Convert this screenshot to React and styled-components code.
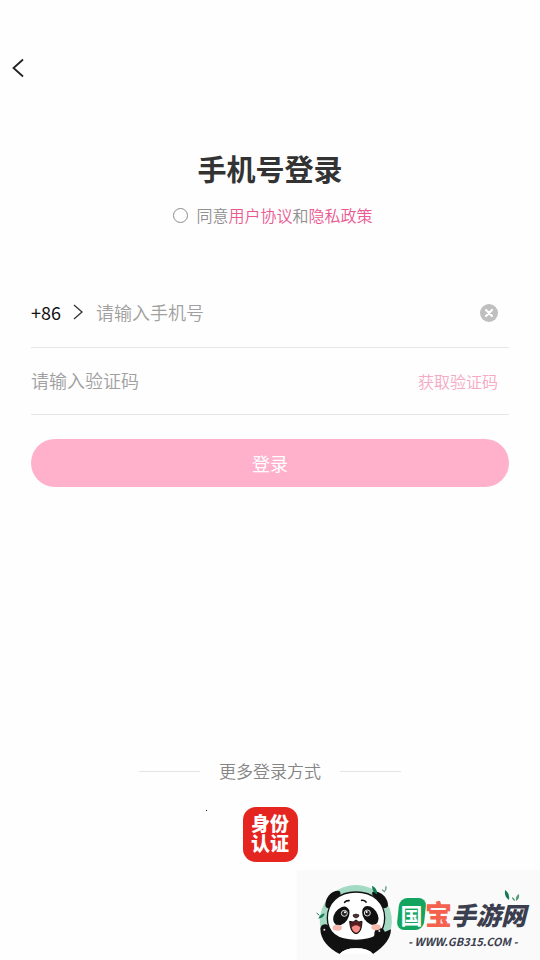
import React, { useState } from 'react'
import styled, { createGlobalStyle } from 'styled-components'

const GlobalStyle = createGlobalStyle`
  * {
    box-sizing: border-box;
  }
  body {
    margin: 0;
    background: #fefefe;
    font-family: 'Noto Sans CJK SC', sans-serif;
    font-weight: 350;
  }
  button,
  input {
    font-family: inherit;
    font-weight: inherit;
  }
`

const Page = styled.div`
  position: relative;
  display: flex;
  flex-direction: column;
  min-height: 100vh;
  overflow: hidden;
`

const TopBar = styled.header`
  display: flex;
  align-items: center;
  height: 48px;
  margin-top: 44px;
  padding-left: 8px;
`

const IconButton = styled.button`
  display: flex;
  padding: 0;
  border: 0;
  background: none;
  cursor: pointer;
`

const Heading = styled.div`
  display: flex;
  flex-direction: column;
  align-items: center;
  margin-top: 52px;
`

const Title = styled.h1`
  margin: 0;
  font-size: 29px;
  line-height: 48px;
  font-weight: 700;
  color: #333;
`

const Agreement = styled.div`
  display: flex;
  align-items: center;
  gap: 8px;
  margin-top: 11px;
  padding-left: 6px;
  font-size: 16px;
  line-height: 24px;
  color: #8f8f8f;
`

const Check = styled.input`
  appearance: none;
  width: 15px;
  height: 15px;
  margin: 0;
  border: 1px solid #8c8c8c;
  border-radius: 50%;
  &:checked {
    background: #f16a9c;
  }
`

const Link = styled.a`
  color: #ea5a92;
  text-decoration: none;
`

const Form = styled.form`
  display: flex;
  flex-direction: column;
  margin-top: 51px;
  padding: 0 31px;
`

const Row = styled.div`
  display: flex;
  align-items: center;
  height: ${(props) => (props.$tall ? '70px' : '67px')};
  padding-right: 11px;
  border-bottom: 1px solid #e6e6e6;
`

const AreaCode = styled.button`
  display: flex;
  align-items: center;
  gap: 11px;
  margin-right: 12px;
  padding: 0 0 2px;
  border: 0;
  background: none;
  font-size: 18px;
  line-height: 24px;
  font-weight: 400;
  color: #111;
`

const Field = styled.input`
  flex: 1;
  min-width: 0;
  height: 40px;
  padding: 0 0 2px;
  border: 0;
  outline: none;
  background: none;
  font-size: 18px;
  color: #333;
  &::placeholder {
    color: #a0a0a0;
  }
`

const CodeButton = styled.button`
  padding: 0;
  border: 0;
  background: none;
  font-size: 16px;
  line-height: 24px;
  color: #f6a9c5;
`

const Submit = styled.button`
  height: 48px;
  margin-top: 24px;
  border: 0;
  border-radius: 24px;
  background: #ffb1cc;
  font-size: 18px;
  font-weight: 400;
  color: #fff;
`

const More = styled.section`
  display: flex;
  flex-direction: column;
  align-items: center;
  margin-top: auto;
  padding-bottom: 98px;
`

const Divider = styled.div`
  display: flex;
  align-items: center;
  gap: 19px;
  font-size: 17px;
  line-height: 24px;
  color: #858585;
  &::before,
  &::after {
    content: '';
    width: 61px;
    height: 1px;
    background: #e4e4e4;
  }
`

const Methods = styled.div`
  display: grid;
  grid-template-columns: 1fr auto 1fr;
  width: 128px;
  margin-top: 24px;
`

const Dot = styled.i`
  width: 1px;
  height: 1px;
  margin-top: 3px;
  background: #111;
`

const IdButton = styled.button`
  width: 55px;
  height: 55px;
  padding: 0 0 3px;
  border: 0;
  border-radius: 13px;
  background: #e5251f;
  font-size: 19px;
  line-height: 20px;
  font-weight: 900;
  color: #fff;
`

const Brand = styled.aside`
  position: absolute;
  right: 0;
  bottom: 0;
  display: flex;
  width: 243px;
  height: 90px;
  padding: 12px 0 0 19px;
  background: #fafafa;
`

const BrandText = styled.div`
  position: relative;
  display: flex;
  flex-direction: column;
  margin: 12px 0 0 2px;
`

const BrandName = styled.div`
  display: flex;
  align-items: center;
  height: 40px;
  font-size: 25px;
  line-height: 44px;
  font-weight: 900;
  font-style: italic;
  color: #3b3e4e;
`

const Badge = styled.span`
  position: relative;
  z-index: 0;
  width: 27px;
  font-size: 22px;
  line-height: 32px;
  font-weight: 700;
  font-style: normal;
  text-align: center;
  color: #fff;
  &::before {
    content: '';
    position: absolute;
    z-index: -1;
    inset: 0;
    border-radius: 8px;
    background: #13a45f;
    transform: skewX(-6deg);
  }
`

const Treasure = styled.span`
  width: 26px;
  font-size: 27px;
  line-height: 40px;
  font-style: normal;
  color: #f4614f;
`

const Site = styled.a`
  margin-left: 10px;
  font-size: 11px;
  line-height: 14px;
  font-weight: 700;
  font-style: italic;
  color: #3b3e4e;
  text-decoration: none;
`

const Leaves = styled.svg`
  position: absolute;
  top: -5px;
  right: 4px;
`

const BackIcon = () => (
  <svg width="20" height="24" viewBox="0 0 20 24" fill="none" stroke="#222" strokeWidth="1.8">
    <path d="M15 3.500L5.500 12l9.500 8.500" />
  </svg>
)

const ChevronIcon = () => (
  <svg width="12" height="18" viewBox="0 0 12 18" fill="none" stroke="#333" strokeWidth="1.300">
    <path d="M2 2l8 7-8 7" />
  </svg>
)

const ClearIcon = () => (
  <svg width="18" height="18" viewBox="0 0 18 18">
    <circle cx="9" cy="9" r="9" fill="#bfbfbf" />
    <path d="M6 6l6 6M12 6l-6 6" stroke="#fff" strokeWidth="2.200" strokeLinecap="round" />
  </svg>
)

const Panda = () => (
  <svg width="80" height="75" viewBox="78 50 240 225">
    <path d="M92 190A108 108 0 1 1 303 190L260 230H130z" fill="#a4dac3" />
    <g fill="#111">
      <path d="M106 122C105 98 122 76 145 76Q154 78 151 90L118 128Q108 130 106 122z" />
      <path d="M247 88Q244 78 256 78C279 82 295 102 294 122Q290 130 280 128z" />
      <path d="M91 190Q93 177 107 177Q117 179 122 192C140 214 165 224 198 224C226 224 244 214 254 200Q258 187 270 188Q282 190 284 200L303 192Q302 232 249 266Q236 249 198 249Q163 249 149 266Q92 236 91 190z" />
    </g>
    <path d="M149 266Q163 249 198 249Q236 249 249 266z" fill="#fff" />
    <path d="M198 80C250 80 284 112 284 158C284 205 250 225 198 225C146 225 112 205 112 158C112 112 146 80 198 80z" fill="#fff" stroke="#111" strokeWidth="4" />
    <path d="M253 208Q253 188 268 188Q284 190 284 206L280 228H250z" fill="#111" />
    <ellipse cx="154" cy="152" rx="21" ry="31" transform="rotate(34 154 152)" fill="#111" />
    <ellipse cx="241" cy="150" rx="21" ry="31" transform="rotate(-34 241 150)" fill="#111" />
    <circle cx="163" cy="144" r="9" fill="#222" stroke="#ddd" strokeWidth="3" />
    <circle cx="232" cy="143" r="9" fill="#222" stroke="#ddd" strokeWidth="3" />
    <circle cx="165" cy="141" r="3" fill="#fff" />
    <circle cx="230" cy="140" r="3" fill="#fff" />
    <path d="M164 111q5-6 13-5M215 105q8-1 13 5" fill="none" stroke="#111" strokeWidth="5" strokeLinecap="round" />
    <ellipse cx="142" cy="187" rx="14" ry="9" fill="#f7b8ad" />
    <ellipse cx="258" cy="186" rx="14" ry="9" fill="#f7b8ad" />
    <path d="M179 168Q190 174 198 164Q206 174 216 168Q215 204 198 205Q181 203 179 168z" fill="#5b1d20" stroke="#111" strokeWidth="3" />
    <path d="M185 186Q198 174 211 186Q208 202 198 202Q188 201 185 186z" fill="#f58c86" />
    <path d="M189 149Q198 143 207 149Q207 156 198 158Q189 156 189 149z" fill="#5a3338" stroke="#111" strokeWidth="2" />
    <path d="M246 61q17 8 15 26q-15-8-15-26zM104 144q-2 14-19 16q4-12 19-16z" fill="#147a50" />
    <path d="M288 63q1 11-5 16M276 73l7 6M80 143l8 7" fill="none" stroke="#2f6f53" strokeWidth="3" />
    <circle cx="103" cy="193" r="3" fill="#ddd" />
    <circle cx="268" cy="197" r="3" fill="#ddd" />
  </svg>
)

const App = () => {
  const [phone, setPhone] = useState('')
  return (
    <Page>
      <GlobalStyle />
      <TopBar>
        <IconButton aria-label="返回"><BackIcon /></IconButton>
      </TopBar>
      <Heading>
        <Title>手机号登录</Title>
        <Agreement>
          <Check type="checkbox" id="agree" />
          <label htmlFor="agree">
            同意<Link href="#terms">用户协议</Link>和<Link href="#privacy">隐私政策</Link>
          </label>
        </Agreement>
      </Heading>
      <Form onSubmit={(e) => e.preventDefault()}>
        <Row $tall>
          <AreaCode type="button">+86 <ChevronIcon /></AreaCode>
          <Field type="tel" aria-label="手机号" placeholder="请输入手机号" value={phone} onChange={(e) => setPhone(e.target.value)} />
          <IconButton type="button" aria-label="清除" onClick={() => setPhone('')}><ClearIcon /></IconButton>
        </Row>
        <Row>
          <Field aria-label="验证码" placeholder="请输入验证码" />
          <CodeButton type="button">获取验证码</CodeButton>
        </Row>
        <Submit>登录</Submit>
      </Form>
      <More>
        <Divider>更多登录方式</Divider>
        <Methods>
          <Dot />
          <IdButton>身份<br />认证</IdButton>
        </Methods>
      </More>
      <Brand>
        <Panda />
        <BrandText>
          <BrandName>
            <Badge>国</Badge>
            <Treasure>宝</Treasure>
            手游网
          </BrandName>
          <Site href="#home">- WWW.GB315.COM -</Site>
          <Leaves width="18" height="14" viewBox="0 0 18 14">
            <path d="M1 1q5 3 4 10q-5-3-4-10z" fill="#147a50" />
            <path d="M15 5q1 5-3 7q-1-5 3-7zM8 8q3 1 3 4q-3-1-3-4z" fill="#5d9a7d" />
          </Leaves>
        </BrandText>
      </Brand>
    </Page>
  )
}

export default App
